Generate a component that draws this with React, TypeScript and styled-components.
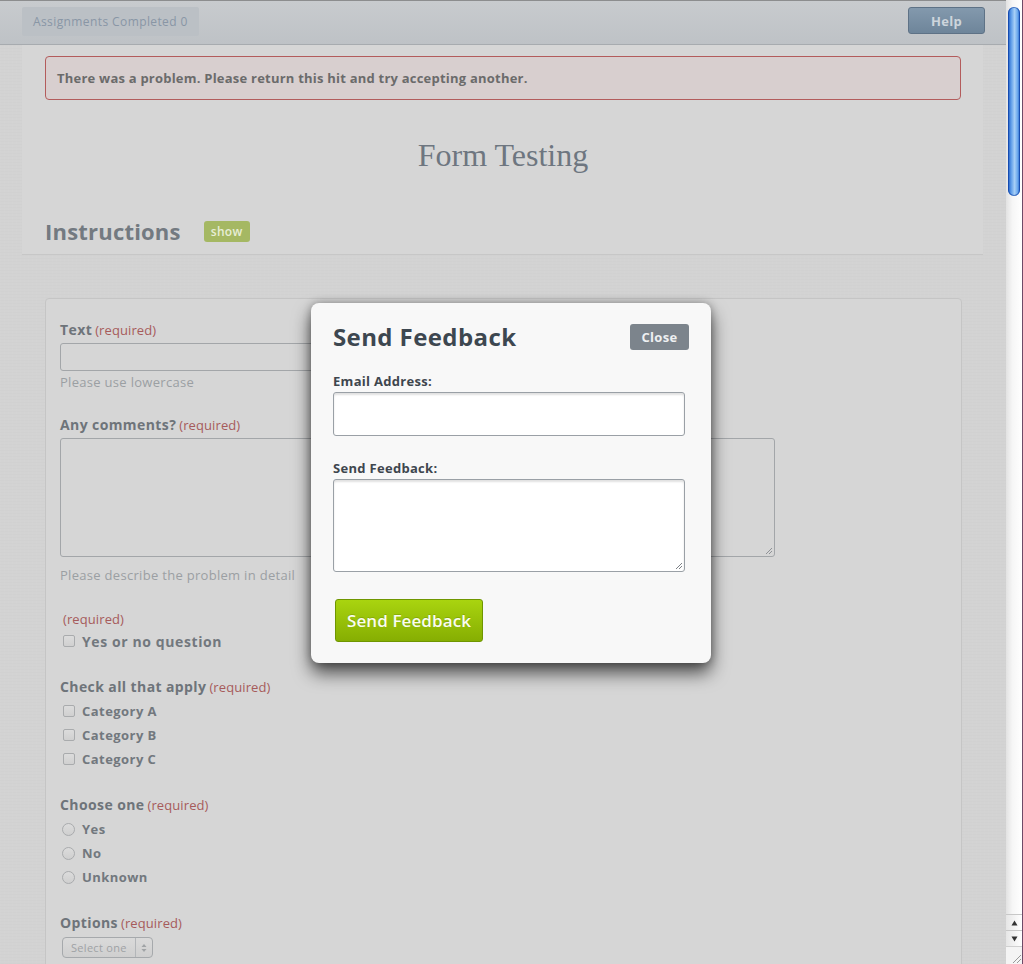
import React from "react";
import styled, { createGlobalStyle } from "styled-components";

const GlobalStyle = createGlobalStyle`
  *, *::before, *::after { box-sizing: border-box; }
  html, body { margin: 0; padding: 0; }
  body {
    background: #d2d2d2;
    font-family: "Open Sans", "DejaVu Sans", sans-serif;
  }
`;

const Window = styled.div`
  display: flex;
  width: 1023px;
  height: 964px;
  overflow: hidden;
`;

const Page = styled.div`
  position: relative;
  flex: 0 0 1006px;
  height: 964px;
  overflow: hidden;
  background-color: #d3d3d3;
  background-image: repeating-linear-gradient(0deg, rgba(0,0,0,0.012) 0 1px, transparent 1px 3px),
    repeating-linear-gradient(90deg, rgba(255,255,255,0.02) 0 1px, transparent 1px 4px);
`;

const Header = styled.header`
  height: 45px;
  border-top: 1px solid #8c8d8e;
  border-bottom: 1px solid #a7abaf;
  background: linear-gradient(#c8cbce, #bec2c6);
  display: flex;
  justify-content: space-between;
  align-items: flex-start;
  padding: 6px 21px 0 22px;
`;

const CountBadge = styled.div`
  height: 29px;
  line-height: 29px;
  padding: 0 11px;
  background: #bbc0c5;
  border-radius: 2px;
  font-size: 12px;
  letter-spacing: 0.4px;
  color: #8996a5;
`;

const HelpButton = styled.button`
  width: 77px;
  height: 27px;
  background: linear-gradient(#8399ad, #6e859a);
  border: 1px solid #5e7286;
  border-radius: 3px;
  color: #cdd5dc;
  font-family: inherit;
  font-weight: 700;
  font-size: 13px;
  letter-spacing: 0.3px;
  padding: 0;
`;

const Main = styled.main`
  margin: 0 23px 0 22px;
`;

const TopSection = styled.section`
  height: 210px;
  background: #d6d6d6;
  border-bottom: 1px solid #c7c7c7;
  padding: 11px 22px 0 23px;
`;

const Alert = styled.div`
  height: 44px;
  border: 1px solid #b35c5c;
  border-radius: 4px;
  background: #d8cfcf;
  padding: 0 11px;
  display: flex;
  align-items: center;
  font-size: 13px;
  font-weight: 700;
  letter-spacing: 0.22px;
  color: #6b6b6b;
`;

const PageTitle = styled.h1`
  margin: 36px 0 0;
  text-align: center;
  font-family: "Liberation Serif", serif;
  font-weight: 400;
  font-size: 32px;
  line-height: 38px;
  color: #6e7680;
`;

const InstructionsRow = styled.div`
  margin-top: 42px;
  display: flex;
  align-items: center;
  gap: 23px;
  height: 30px;
`;

const SectionHeading = styled.h2`
  margin: 0;
  font-size: 22px;
  font-weight: 700;
  letter-spacing: 0.2px;
  color: #737a81;
`;

const ShowBadge = styled.span`
  display: inline-flex;
  align-items: center;
  justify-content: center;
  width: 46px;
  height: 21px;
  border-radius: 3px;
  background: #a5b863;
  color: #e8eed6;
  font-size: 12px;
  font-weight: 600;
  letter-spacing: 0.3px;
`;

const FormPanel = styled.form`
  margin: 43px 0 0 23px;
  width: 917px;
  height: 700px;
  border: 1px solid #c5c5c5;
  border-radius: 4px;
  background: #d6d6d6;
  padding: 22px 14px;
`;

const Field = styled.div<{ $space?: number }>`
  margin-bottom: ${(p) => p.$space ?? 27}px;
`;

const Label = styled.div<{ $gap?: number }>`
  font-size: 14px;
  line-height: 18px;
  font-weight: 700;
  letter-spacing: 0.4px;
  color: #6e747a;
  margin-bottom: ${(p) => p.$gap ?? 4}px;
`;

const Required = styled.span`
  font-size: 13px;
  font-weight: 400;
  letter-spacing: 0.1px;
  color: #a65b5b;
  margin-left: 3px;
`;

const LoneRequired = styled.div`
  font-size: 13px;
  line-height: 16px;
  letter-spacing: 0.1px;
  color: #a65b5b;
  padding-left: 3px;
  margin-bottom: 4px;
`;

const TextInput = styled.div`
  width: 400px;
  height: 28px;
  border: 1px solid #a3a6a9;
  border-radius: 3px;
  background: #d6d6d6;
`;

const TextArea = styled.div`
  position: relative;
  width: 715px;
  height: 119px;
  border: 1px solid #a3a6a9;
  border-radius: 3px;
  background: #d6d6d6;
`;

const Hint = styled.div<{ $top: number }>`
  margin-top: ${(p) => p.$top}px;
  font-size: 13px;
  line-height: 16px;
  letter-spacing: 0.3px;
  color: #9b9fa3;
`;

const OptionRow = styled.div<{ $big?: boolean }>`
  display: flex;
  align-items: center;
  gap: 7px;
  height: ${(p) => (p.$big ? 20 : 24)}px;
  padding-left: 3px;
  font-size: ${(p) => (p.$big ? 14 : 13)}px;
  font-weight: 700;
  letter-spacing: ${(p) => (p.$big ? 0.6 : 0.45)}px;
  color: #72787e;
`;

const CheckBox = styled.span`
  width: 12px;
  height: 12px;
  border: 1px solid #a9abad;
  border-radius: 2px;
  background: linear-gradient(#dcdcdc, #d0d0d0);
`;

const RadioDot = styled.span`
  width: 13px;
  height: 13px;
  margin-left: -1px;
  border: 1px solid #a9abad;
  border-radius: 50%;
  background: linear-gradient(#dcdcdc, #cfcfcf);
`;

const SelectBox = styled.div`
  margin-left: 2px;
  width: 91px;
  height: 21px;
  border: 1px solid #a6a9ac;
  border-radius: 4px;
  background: linear-gradient(#dadada, #cfcfcf);
  display: flex;
  align-items: center;
  font-size: 11px;
  letter-spacing: 0.3px;
  color: #9fa2a5;
`;

const SelectText = styled.span`
  flex: 1;
  padding-left: 8px;
`;

const SelectArrows = styled.span`
  width: 17px;
  height: 100%;
  border-left: 1px solid #b3b6b9;
  display: flex;
  align-items: center;
  justify-content: center;
`;

const ResizeGrip = styled.svg`
  position: absolute;
  right: 1px;
  bottom: 1px;
`;

/* Modal */
const Modal = styled.div`
  position: absolute;
  left: 311px;
  top: 303px;
  width: 400px;
  height: 360px;
  background: #f8f8f8;
  border-radius: 8px;
  box-shadow: 0 10px 18px rgba(0, 0, 0, 0.65), 0 0 8px rgba(0, 0, 0, 0.3);
  padding: 19px 22px 20px 22px;
  display: flex;
  flex-direction: column;
`;

const ModalHeader = styled.div`
  display: flex;
  justify-content: space-between;
  align-items: flex-start;
  height: 30px;
`;

const ModalTitle = styled.h3`
  margin: 0;
  font-size: 24px;
  line-height: 30px;
  font-weight: 700;
  letter-spacing: 0.4px;
  color: #3d4750;
`;

const CloseButton = styled.button`
  margin-top: 2px;
  width: 59px;
  height: 26px;
  border: none;
  border-radius: 3px;
  background: #7c848c;
  color: #eef0f2;
  font-family: inherit;
  font-size: 13px;
  font-weight: 700;
  letter-spacing: 0.3px;
  padding: 0;
`;

const ModalLabel = styled.label<{ $top: number }>`
  display: block;
  margin-top: ${(p) => p.$top}px;
  font-size: 13px;
  line-height: 16px;
  font-weight: 700;
  letter-spacing: 0.3px;
  color: #3e464e;
`;

const ModalInput = styled.div<{ $h: number }>`
  position: relative;
  margin-top: 3px;
  width: 352px;
  height: ${(p) => p.$h}px;
  background: #fff;
  border: 1px solid #9aa0a6;
  border-radius: 3px;
  box-shadow: inset 0 2px 2px rgba(0, 0, 0, 0.12);
`;

const SubmitButton = styled.button`
  margin: 27px 0 0 2px;
  width: 148px;
  height: 43px;
  border: 1px solid #6f9600;
  border-radius: 3px;
  background: linear-gradient(#a9d40f, #86ae02);
  color: #fafcf0;
  font-family: inherit;
  font-size: 17px;
  font-weight: 600;
  letter-spacing: 0.1px;
  padding: 0;
  text-shadow: 0 -1px 0 rgba(0, 0, 0, 0.15);
`;

/* Scrollbar */
const ScrollTrack = styled.div`
  flex: 0 0 16px;
  height: 964px;
  background: linear-gradient(90deg, #e2e2e2, #f6f6f6 40%, #ffffff);
  display: flex;
  flex-direction: column;
  padding-top: 7px;
`;

const ScrollThumb = styled.div`
  margin-left: 2px;
  width: 12px;
  height: 189px;
  border-radius: 6px;
  background: linear-gradient(90deg, #1b58c2, #5c9be8 25%, #a8d0f7 55%, #6aa7ec 80%, #1f5fc9);
  box-shadow: inset 0 0 0 1px rgba(10, 60, 160, 0.6);
`;

const ScrollSpacer = styled.div`
  flex: 1;
`;

const ScrollArrow = styled.div`
  height: 16px;
  display: flex;
  align-items: center;
  justify-content: center;
  border-top: 1px solid #c8c8c8;
  background: linear-gradient(90deg, #e6e6e6, #ffffff);
`;

const ResizeCorner = styled.div`
  height: 18px;
  background: #f4f4f4;
  border-top: 1px solid #d0d0d0;
  display: flex;
  align-items: flex-end;
  justify-content: flex-end;
`;

const EdgeStrip = styled.div`
  flex: 0 0 1px;
  background: #6d4a68;
`;

const Grip = ({ color }: { color: string }) => (
  <ResizeGrip width="8" height="8" viewBox="0 0 8 8">
    <path d="M7 1 L1 7 M7 4 L4 7" stroke={color} strokeWidth="1" fill="none" />
  </ResizeGrip>
);

export default function App() {
  return (
    <>
      <GlobalStyle />
      <Window>
        <Page>
          <Header>
            <CountBadge>Assignments Completed 0</CountBadge>
            <HelpButton>Help</HelpButton>
          </Header>
          <Main>
            <TopSection>
              <Alert>There was a problem. Please return this hit and try accepting another.</Alert>
              <PageTitle>Form Testing</PageTitle>
              <InstructionsRow>
                <SectionHeading>Instructions</SectionHeading>
                <ShowBadge>show</ShowBadge>
              </InstructionsRow>
            </TopSection>
            <FormPanel>
              <Field $space={26}>
                <Label>
                  Text<Required>(required)</Required>
                </Label>
                <TextInput />
                <Hint $top={3}>Please use lowercase</Hint>
              </Field>
              <Field $space={28}>
                <Label>
                  Any comments?<Required>(required)</Required>
                </Label>
                <TextArea>
                  <Grip color="#8f9296" />
                </TextArea>
                <Hint $top={10}>Please describe the problem in detail</Hint>
              </Field>
              <Field>
                <LoneRequired>(required)</LoneRequired>
                <OptionRow $big>
                  <CheckBox />
                  Yes or no question
                </OptionRow>
              </Field>
              <Field $space={25}>
                <Label $gap={3}>
                  Check all that apply<Required>(required)</Required>
                </Label>
                {["Category A", "Category B", "Category C"].map((c) => (
                  <OptionRow key={c}>
                    <CheckBox />
                    {c}
                  </OptionRow>
                ))}
              </Field>
              <Field $space={25}>
                <Label $gap={3}>
                  Choose one<Required>(required)</Required>
                </Label>
                {["Yes", "No", "Unknown"].map((c) => (
                  <OptionRow key={c}>
                    <RadioDot />
                    {c}
                  </OptionRow>
                ))}
              </Field>
              <Field>
                <Label $gap={5}>
                  Options<Required>(required)</Required>
                </Label>
                <SelectBox>
                  <SelectText>Select one</SelectText>
                  <SelectArrows>
                    <svg width="6" height="10" viewBox="0 0 6 10">
                      <path d="M3 1 L5.5 4 L0.5 4 Z M3 9 L5.5 6 L0.5 6 Z" fill="#a0a3a6" />
                    </svg>
                  </SelectArrows>
                </SelectBox>
              </Field>
            </FormPanel>
          </Main>

          <Modal role="dialog">
            <ModalHeader>
              <ModalTitle>Send Feedback</ModalTitle>
              <CloseButton>Close</CloseButton>
            </ModalHeader>
            <ModalLabel $top={21}>Email Address:</ModalLabel>
            <ModalInput $h={44} />
            <ModalLabel $top={24}>Send Feedback:</ModalLabel>
            <ModalInput $h={93}>
              <Grip color="#7d8186" />
            </ModalInput>
            <SubmitButton>Send Feedback</SubmitButton>
          </Modal>
        </Page>
        <ScrollTrack>
          <ScrollThumb />
          <ScrollSpacer />
          <ScrollArrow>
            <svg width="7" height="6" viewBox="0 0 7 6">
              <path d="M3.5 0.5 L6.5 5.5 L0.5 5.5 Z" fill="#333" />
            </svg>
          </ScrollArrow>
          <ScrollArrow>
            <svg width="7" height="6" viewBox="0 0 7 6">
              <path d="M3.5 5.5 L6.5 0.5 L0.5 0.5 Z" fill="#333" />
            </svg>
          </ScrollArrow>
          <ResizeCorner>
            <svg width="12" height="12" viewBox="0 0 12 12">
              <path d="M11 3 L3 11 M11 7 L7 11" stroke="#999" strokeWidth="1" fill="none" />
            </svg>
          </ResizeCorner>
        </ScrollTrack>
        <EdgeStrip />
      </Window>
    </>
  );
}
